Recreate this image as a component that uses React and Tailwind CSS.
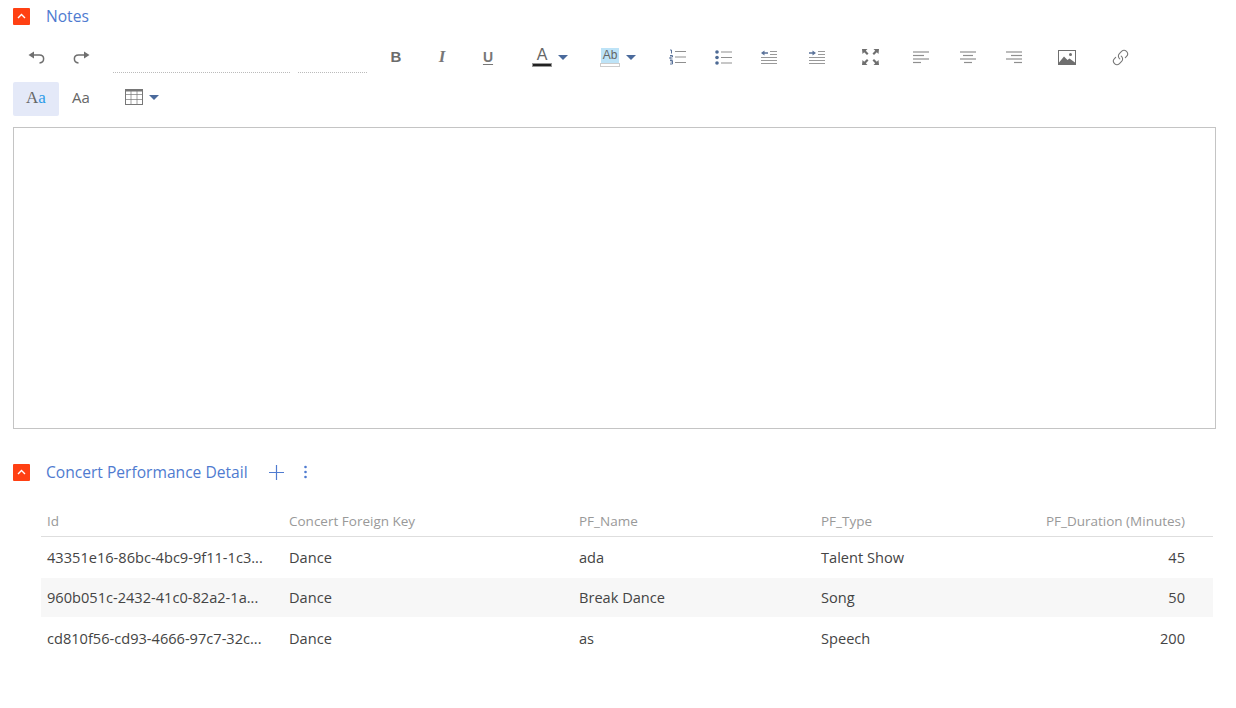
import { Link } from "lucide-react";

const rows = [
  { id: "43351e16-86bc-4bc9-9f11-1c3...", key: "Dance", name: "ada", type: "Talent Show", duration: "45", height: "h-[41px]", bg: "" },
  { id: "960b051c-2432-41c0-82a2-1a...", key: "Dance", name: "Break Dance", type: "Song", duration: "50", height: "h-[39px]", bg: "bg-[#f7f7f7]" },
  { id: "cd810f56-cd93-4666-97c7-32c...", key: "Dance", name: "as", type: "Speech", duration: "200", height: "h-[42px] pt-[2px]", bg: "" },
];

const Collapse = () => (
  <span className="w-[17px] h-[17px] bg-[#ff4013] rounded-[1px] flex items-center justify-center shrink-0">
    <svg width="9" height="6" viewBox="0 0 9 6" fill="none" stroke="#fff" strokeWidth="1.4">
      <path d="M1 5l3.5-3.5L8 5" />
    </svg>
  </span>
);

const Caret = () => (
  <svg width="10" height="5" viewBox="0 0 10 5" fill="#4a6a9c">
    <path d="M0 0h10L5 5z" />
  </svg>
);

const Lines = ({ rows }) => (
  <svg width="16" height="14" viewBox="0 0 16 14" stroke="#8f8f8f" strokeWidth="1.200">
    {rows.map(([a, b], i) => (
      <path key={i} d={`M${a} ${i * 3.500 + 2}H${b}`} />
    ))}
  </svg>
);

const Undo = ({ flip }) => (
  <svg width="17" height="13" viewBox="0 0 17 13" fill="none" className={flip ? "-scale-x-100" : ""}>
    <path d="M0.500 4l5.500-3.500v7z" fill="#6f6f6f" />
    <path d="M5 4h6.500c5.500 0 5.500 7.500 0 8" stroke="#6f6f6f" strokeWidth="1.500" />
  </svg>
);

const ListNumbered = () => (
  <svg width="17" height="16" viewBox="0 0 17 16">
    <path d="M1 1h1.500v3.500M1 6.500h2.500v1.500h-2.500v2h2.500M1 11.500h2.500v3.500h-2.500M1.500 13h2" fill="none" stroke="#5a7299" strokeWidth="1" />
    <path d="M6 2.500h11M6 8h11M6 13.500h11" stroke="#8f8f8f" strokeWidth="1.200" />
  </svg>
);

const ListBullet = () => (
  <svg width="17" height="15" viewBox="0 0 17 15">
    <circle cx="2" cy="2" r="1.800" fill="#4d6a94" />
    <circle cx="2" cy="7.500" r="1.800" fill="#4d6a94" />
    <circle cx="2" cy="13" r="1.800" fill="#4d6a94" />
    <path d="M6 2h11M6 7.500h11M6 13h11" stroke="#8f8f8f" strokeWidth="1.200" />
  </svg>
);

const Indent = ({ out }) => (
  <svg width="16" height="14" viewBox="0 0 16 14">
    <path d="M9 1.500h7M9 4.500h7M0 7.500h16M0 10.500h16M0 13.500h16" stroke="#999" strokeWidth="1.100" />
    {out ? (
      <path d="M0 3l3.500-2.500v1.800H7v1.400H3.500v1.800z" fill="#5a7299" />
    ) : (
      <path d="M7 3L3.500.5v1.800H0v1.400h3.500v1.800z" fill="#5a7299" />
    )}
  </svg>
);

const Expand = () => (
  <svg width="17" height="16" viewBox="0 0 17 16" fill="#6f6f6f">
    <path d="M0 0h5.500L3.800 1.700 6.500 4.400 5 5.900 2.200 3.200.5 5z" />
    <path d="M17 0h-5.500l1.700 1.700-2.700 2.700L12 5.900l2.800-2.700L16.500 5z" />
    <path d="M0 16h5.500l-1.700-1.700 2.700-2.700L5 10.100l-2.800 2.700L.5 11z" />
    <path d="M17 16h-5.500l1.700-1.700-2.700-2.700 1.500-1.500 2.800 2.700 1.700-1.800z" />
  </svg>
);

const ImageIcon = () => (
  <svg width="18" height="15" viewBox="0 0 18 15">
    <rect x="0.500" y="0.500" width="17" height="14" fill="#fff" stroke="#6f6f6f" />
    <path d="M1 12.500l5-6 3.500 3.500 2-1.500 5.500 4v1.500H1z" fill="#6f6f6f" />
    <circle cx="12.500" cy="4.500" r="1.500" fill="#6f6f6f" />
  </svg>
);

const TableIcon = () => (
  <svg width="18" height="16" viewBox="0 0 18 16" fill="none" stroke="#777">
    <rect x="0.500" y="0.500" width="17" height="15" />
    <path d="M0 5.500h18M0 10.500h18M6 0v16M12 0v16" strokeOpacity="0.700" />
    <path d="M0 1.500h18" strokeWidth="2" />
  </svg>
);

const Tool = ({ w, children }) => (
  <div className={`${w} h-[38px] flex items-center justify-center gap-[6px] shrink-0`}>{children}</div>
);

const SectionHeader = ({ title, children }) => (
  <div className="flex items-center pl-[13px] h-[22px]">
    <Collapse />
    <span className="ml-4 pt-[2px] text-[15.6px] text-[#4f7bd0] whitespace-nowrap">{title}</span>
    {children}
  </div>
);

export default function App() {
  return (
    <div className="min-h-screen overflow-hidden bg-white font-['Open_Sans',sans-serif] text-[14.6px] text-[#444]">
      <div className="pt-[5px]">
        <SectionHeader title="Notes" />
      </div>

      {/* toolbar */}
      <div className="flex pl-[13px] mt-[11px] h-[44px] items-start">
        <Tool w="w-[46px]"><Undo /></Tool>
        <Tool w="w-[44px]"><Undo flip /></Tool>
        <div className="ml-[10px] w-[177px] h-[35px] border-b border-dotted border-[#bbb] shrink-0" />
        <div className="ml-[8px] w-[69px] h-[35px] border-b border-dotted border-[#bbb] shrink-0" />
        <Tool w="w-[58px]"><span className="font-['Liberation_Sans',sans-serif] font-bold text-[15px] text-[#6b6b6b]">B</span></Tool>
        <Tool w="w-[34px]"><span className="font-['Liberation_Serif',serif] italic font-bold text-[17px] text-[#777]">I</span></Tool>
        <Tool w="w-[58px]"><span className="font-['Liberation_Sans',sans-serif] font-bold text-[14px] text-[#777] underline underline-offset-2">U</span></Tool>
        <Tool w="w-[50px] ml-[8px]">
          <span className="flex flex-col items-center w-[20px]">
            <span className="font-['Liberation_Sans',sans-serif] text-[16px] leading-[16px] text-[#666]">A</span>
            <span className="w-[20px] h-[4px] bg-[#222] border border-[#999]" />
          </span>
          <Caret />
        </Tool>
        <Tool w="w-[86px]">
          <span className="flex flex-col items-center w-[20px]">
            <span className="bg-[#bde3f7] w-[18px] text-center font-['Liberation_Sans',sans-serif] text-[12px] leading-[15px] text-[#666]">Ab</span>
            <span className="w-[20px] h-[4px] bg-white border border-[#ccc]" />
          </span>
          <Caret />
        </Tool>
        <Tool w="w-[32px]"><ListNumbered /></Tool>
        <Tool w="w-[60px]"><ListBullet /></Tool>
        <Tool w="w-[32px]"><Indent out /></Tool>
        <Tool w="w-[63px]"><Indent /></Tool>
        <Tool w="w-[44px]"><Expand /></Tool>
        <Tool w="w-[58px]"><Lines rows={[[0, 16], [0, 11], [0, 16], [0, 8]]} /></Tool>
        <Tool w="w-[36px]"><Lines rows={[[0, 16], [3, 13], [0, 16], [4, 12]]} /></Tool>
        <Tool w="w-[56px]"><Lines rows={[[0, 16], [5, 16], [0, 16], [8, 16]]} /></Tool>
        <Tool w="w-[50px]"><ImageIcon /></Tool>
        <Tool w="w-[56px]"><Link size={17} strokeWidth={1.5} color="#777" className="-scale-x-100 rotate-90" /></Tool>
      </div>

      <div className="flex pl-[13px] items-start h-[35px]">
        <div className="w-[46px] h-[34px] pb-[3px] bg-[#e4e9f8] rounded-[2px] flex items-center justify-center font-['Liberation_Serif',serif] text-[17px] text-[#666]">
          A<span className="text-[#2b9be8]">a</span>
        </div>
        <div className="w-[44px] h-[34px] pb-[3px] flex items-center justify-center text-[15px] text-[#666]">Aa</div>
        <div className="ml-[22px] h-[34px] pb-[4px] flex items-center gap-[6px]">
          <TableIcon />
          <Caret />
        </div>
      </div>

      <div className="ml-[13px] mt-[10px] w-[1203px] h-[302px] border border-[#c4c4c4]" />

      <div className="mt-[32px]">
        <SectionHeader title="Concert Performance Detail">
          <svg className="ml-[21px]" width="15" height="15" viewBox="0 0 15 15" stroke="#4f7bd0" strokeWidth="1.200">
            <path d="M7.500 0v15M0 7.500h15" />
          </svg>
          <svg className="ml-[20px]" width="3" height="14" viewBox="0 0 3 14" fill="#4f7bd0">
            <circle cx="1.500" cy="2" r="1.300" />
            <circle cx="1.500" cy="7" r="1.300" />
            <circle cx="1.500" cy="12" r="1.300" />
          </svg>
        </SectionHeader>
      </div>

      {/* table */}
      <div className="ml-[41px] mt-[22px] w-[1172px]">
        <div className="grid grid-cols-[242px_290px_242px_398px] h-[32px] pt-[2px] items-center border-b border-[#dedede] text-[13.500px] text-[#999]">
          <div className="pl-[6px]">Id</div>
          <div className="pl-[6px]">Concert Foreign Key</div>
          <div className="pl-[6px]">PF_Name</div>
          <div className="flex justify-between pl-[6px] pr-[28px]">
            <span>PF_Type</span>
            <span>PF_Duration (Minutes)</span>
          </div>
        </div>
        {rows.map((r) => (
          <div key={r.id} className={`grid grid-cols-[242px_290px_242px_398px] items-center ${r.height} ${r.bg}`}>
            <div className="pl-[6px] whitespace-nowrap">{r.id}</div>
            <div className="pl-[6px]">{r.key}</div>
            <div className="pl-[6px]">{r.name}</div>
            <div className="flex justify-between pl-[6px] pr-[28px]">
              <span>{r.type}</span>
              <span>{r.duration}</span>
            </div>
          </div>
        ))}
      </div>
    </div>
  );
}
